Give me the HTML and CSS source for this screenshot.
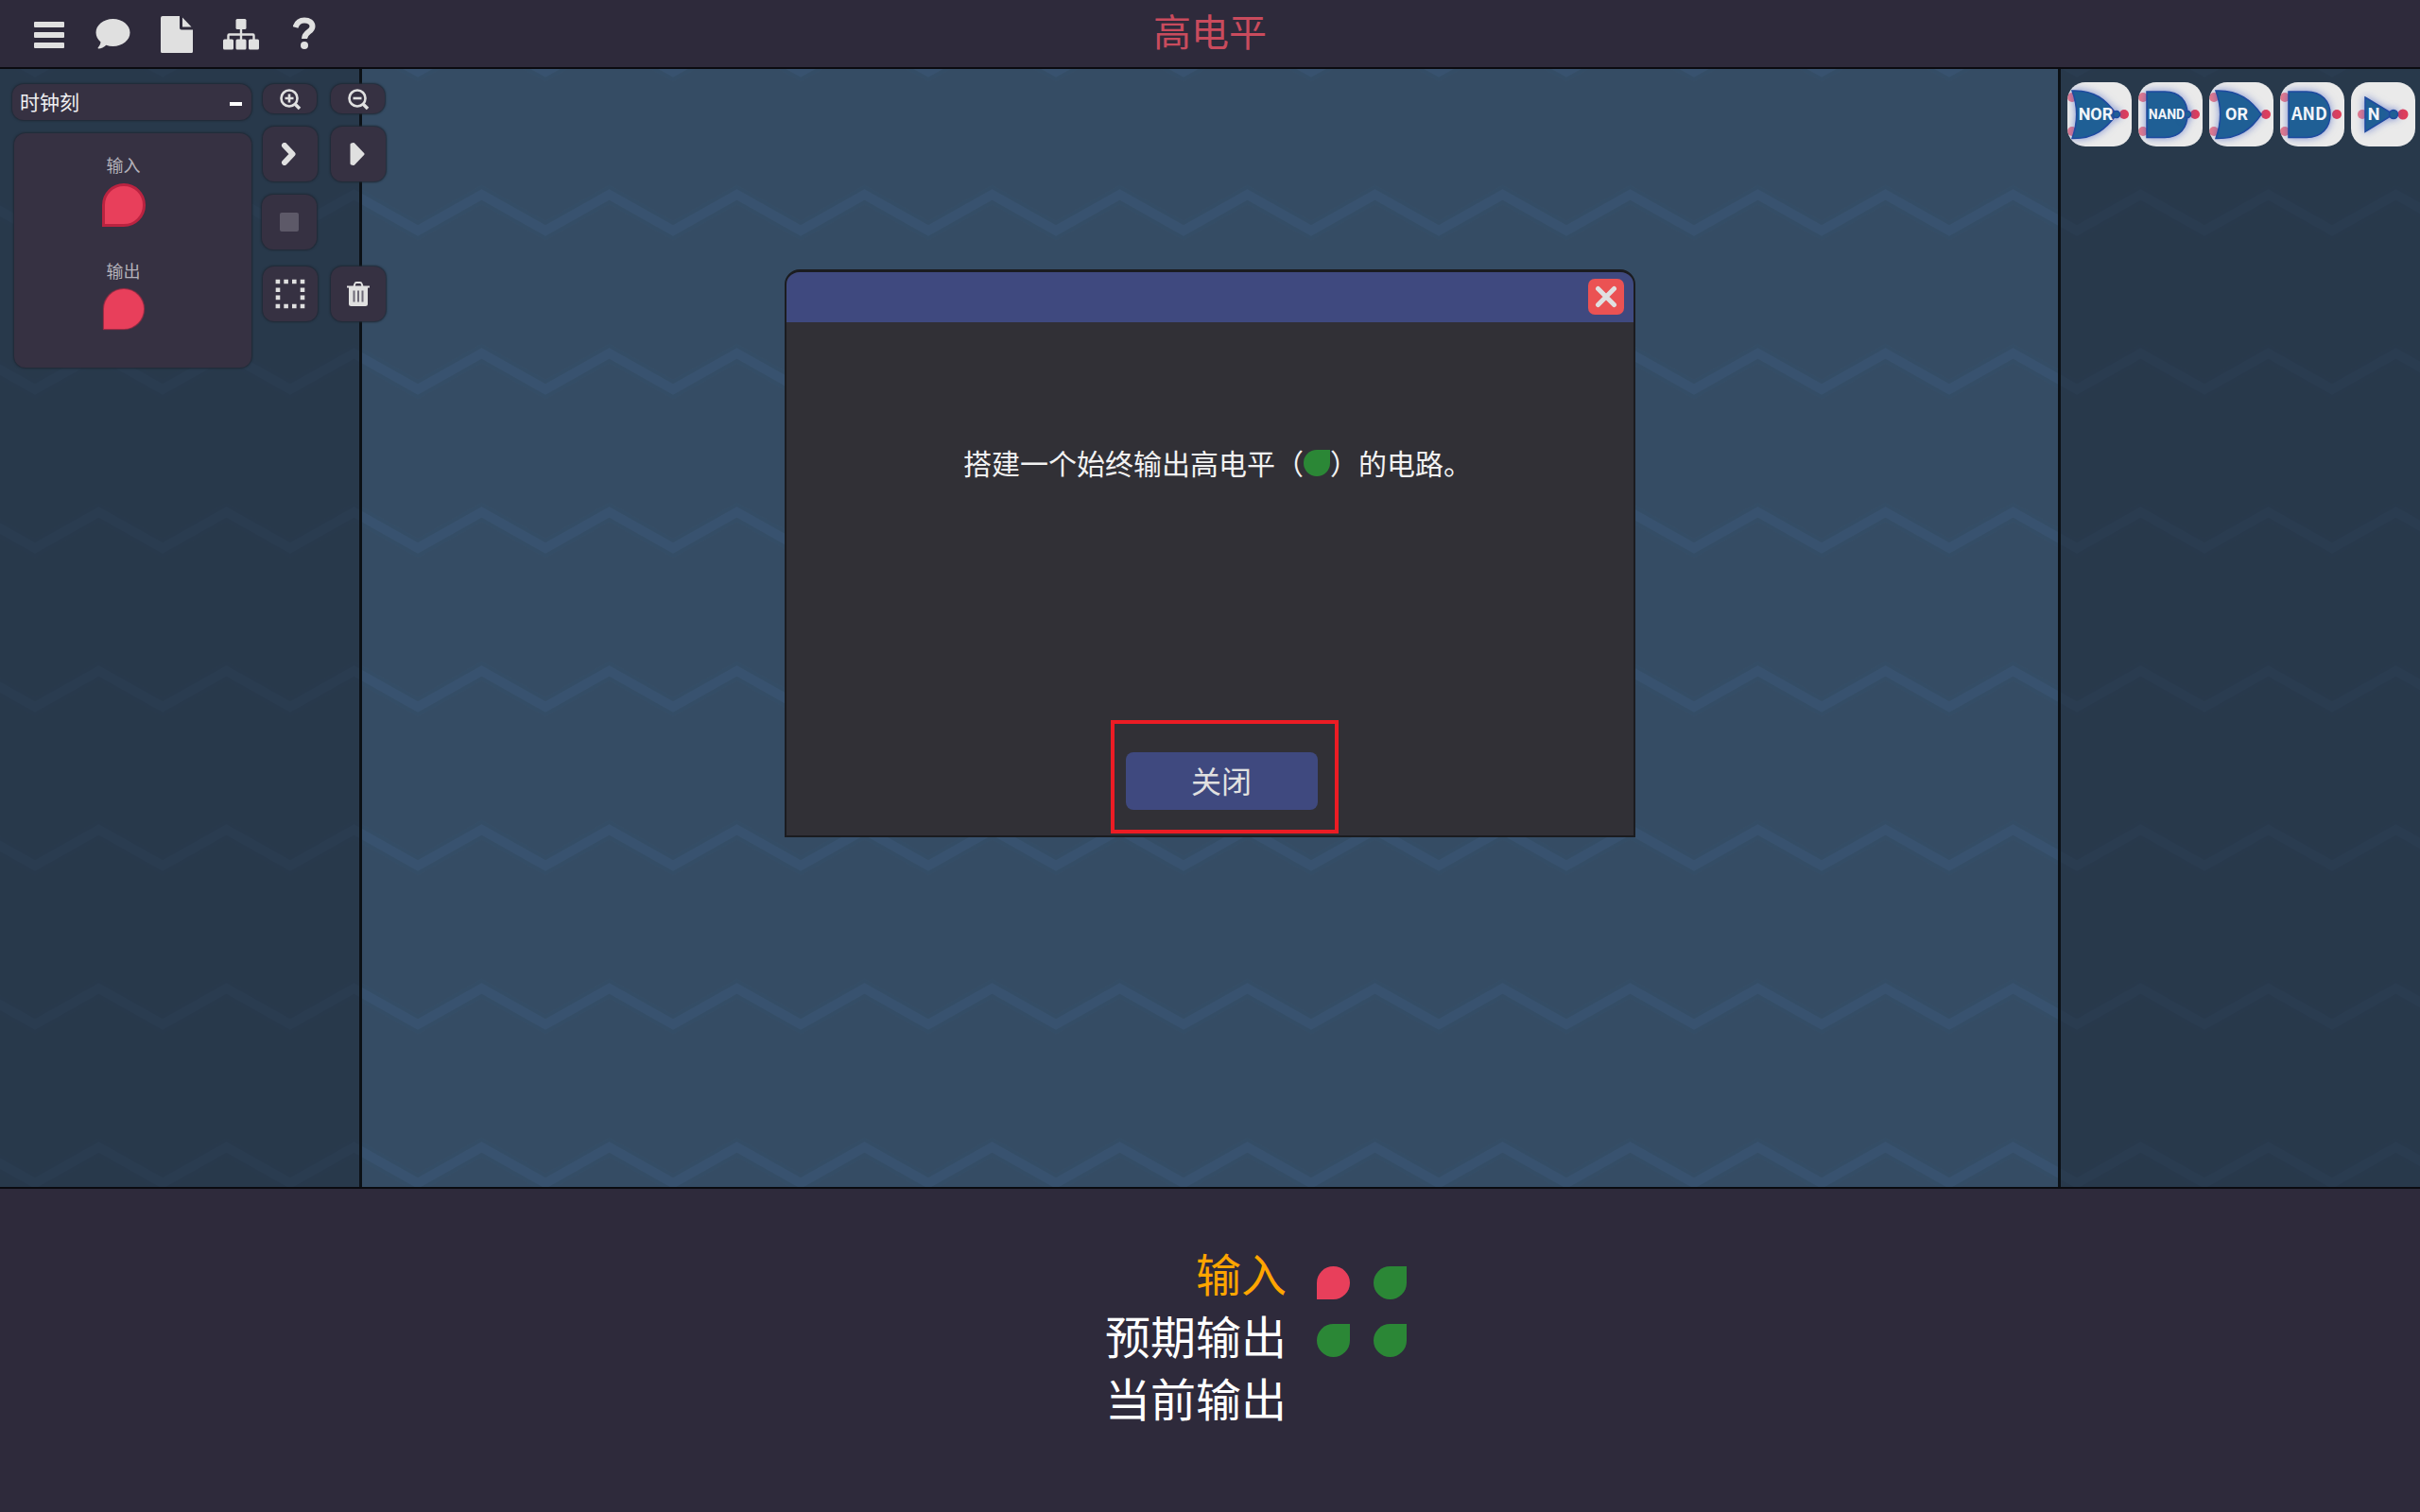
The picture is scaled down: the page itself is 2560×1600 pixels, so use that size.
FILE: index.html
```html
<!DOCTYPE html>
<html lang="zh-CN">
<head>
<meta charset="utf-8">
<meta name="viewport" content="width=device-width, initial-scale=1">
<title>高电平</title>
<link rel="stylesheet" href="styles.css">
</head>
<body>
<header class="topbar">
  <nav class="menu" aria-label="菜单">
    <button class="menu-btn" type="button" aria-label="菜单"><svg width="34" height="40" viewBox="0 0 34 40"><g fill="currentColor"><rect x="1" y="6" width="32" height="6" rx="1"/><rect x="1" y="17" width="32" height="6" rx="1"/><rect x="1" y="28" width="32" height="6" rx="1"/></g></svg></button>
    <button class="menu-btn" type="button" aria-label="对话"><svg width="37" height="40" viewBox="0 0 37 40"><path fill="currentColor" d="M18.500 3C28.500 3 36.500 9.500 36.500 17.500S28.500 32 18.500 32c-2.600 0-5-.4-7.200-1.200C9 33 6 34.500 3.200 34.500c-.7 0-.9-.7-.4-1.200 1.300-1.500 2.400-3.400 2.700-5.800C2.400 24.800.5 21.300.5 17.500.5 9.500 8.500 3 18.500 3z"/></svg></button>
    <button class="menu-btn" type="button" aria-label="文件"><svg width="34" height="40" viewBox="0 0 34 40"><path fill="currentColor" d="M2 0H20V12.500Q20 14.500 22 14.500H34V37.500Q34 39 32.500 39H1.500Q0 39 0 37.500V2Q0 0 2 0zM23 1.500 32.500 11.500H23z"/></svg></button>
    <button class="menu-btn" type="button" aria-label="关卡"><svg width="38" height="40" viewBox="0 0 38 40"><g fill="currentColor"><rect x="13.500" y="3" width="11" height="11" rx="1.500"/><rect x="0" y="24.500" width="11" height="11" rx="1.500"/><rect x="13.500" y="24.500" width="11" height="11" rx="1.500"/><rect x="27" y="24.500" width="11" height="11" rx="1.500"/></g><path fill="none" stroke="currentColor" stroke-width="2.400" d="M19 13v12M5.500 25v-4.500q0-1 1-1h25q1 0 1 1V25"/></svg></button>
    <button class="menu-btn" type="button" aria-label="帮助"><svg width="24" height="40" viewBox="0 0 24 40"><path fill="none" stroke="currentColor" stroke-width="6" d="M2.500 12C4 7 7 4.500 12 4.500c5 0 8.500 2.500 8.500 6.500 0 6-8.500 5.500-8.500 13"/><circle cx="12" cy="31" r="4" fill="currentColor"/></svg></button>
  </nav>
  <h1 class="title">高电平</h1>
</header>

<main class="board">
  <svg class="waves" aria-hidden="true">
    <defs>
      <pattern id="zigzag" x="37" y="101" width="135" height="168" patternUnits="userSpaceOnUse">
        <g fill="none">
          <path stroke="#334e67" stroke-opacity=".5" stroke-width="18" d="M-67.500 32 0 70 67.500 32 135 70 202.500 32"/>
          <path stroke="#38526f" stroke-width="10" d="M-67.500 32 0 70 67.500 32 135 70 202.500 32"/>
        </g>
      </pattern>
    </defs>
    <rect width="100%" height="100%" fill="url(#zigzag)"/>
  </svg>

  <aside class="side side-left">
    <div class="clock">
      <button class="clock-head" type="button"><span>时钟刻</span><span class="dash"></span></button>
      <div class="clock-body">
        <span class="clock-label">输入</span>
        <span class="drop low big ring"></span>
        <span class="clock-label second">输出</span>
        <span class="drop low big"></span>
      </div>
    </div>
    <div class="tools">
      <button class="tool short" type="button" aria-label="放大"><svg width="24" height="24" viewBox="0 0 24 24"><g fill="none" stroke="currentColor" stroke-width="2.600"><circle cx="11" cy="11" r="8.500"/><path d="M17 17l5 5" stroke-width="3.600"/><path d="M6.500 11h9M11 6.500v9"/></g></svg></button>
      <button class="tool short" type="button" aria-label="缩小"><svg width="24" height="24" viewBox="0 0 24 24"><g fill="none" stroke="currentColor" stroke-width="2.600"><circle cx="11" cy="11" r="8.500"/><path d="M17 17l5 5" stroke-width="3.600"/><path d="M6.500 11h9"/></g></svg></button>
      <button class="tool" type="button" aria-label="单步"><svg width="24" height="24" viewBox="0 0 24 24"><path fill="none" stroke="currentColor" stroke-width="6" stroke-linejoin="round" stroke-linecap="round" d="M6 3l8.500 9L6 21"/></svg></button>
      <button class="tool" type="button" aria-label="运行"><svg width="24" height="24" viewBox="0 0 24 24"><path fill="currentColor" stroke="currentColor" stroke-width="3" stroke-linejoin="round" d="M5 2l2-.5L17 12 7 22.500 5 22z"/></svg></button>
      <button class="tool" type="button" aria-label="停止" disabled><svg width="20" height="20" viewBox="0 0 20 20"><rect width="20" height="20" rx="2" fill="#5d5968"/></svg></button>
      <span></span>
      <button class="tool low-row" type="button" aria-label="框选"><svg width="32" height="32" viewBox="0 0 32 32"><path fill="none" stroke="currentColor" stroke-width="4.600" stroke-dasharray="4.600 4.100" d="M.6 3H31.400M.6 29H31.400"/><path fill="none" stroke="currentColor" stroke-width="4.600" stroke-dasharray="4.600 3.600" d="M3 9.400V23M29 9.400V23"/></svg></button>
      <button class="tool low-row" type="button" aria-label="删除"><svg width="24" height="26" viewBox="0 0 24 26"><path fill="none" stroke="currentColor" stroke-width="2" d="M0 5.500h24M7.500 5l1-3q.3-1 1.500-1h4q1.200 0 1.500 1l1 3"/><path fill="currentColor" d="M2 6h20v17.500q0 2.500-2.500 2.500h-15Q2 26 2 23.500z"/><path stroke="#6d6977" stroke-width="2" d="M7.500 9.500v12M12 9.500v12M16.500 9.500v12"/></svg></button>
    </div>
  </aside>

  <div class="field"></div>

  <aside class="side side-right">
    <button class="gate" type="button"><svg viewBox="0 0 68 68"><g fill="#e03e5b"><g opacity=".65"><circle cx="5" cy="16" r="5"/><circle cx="5" cy="52" r="5"/></g><circle cx="60" cy="34" r="5"/></g><path class="shape" d="M5 9C29 8 41 19 52 34 41 49 29 60 5 59.500 11 43 11 25 5 9z"/><circle class="shape" cx="52" cy="34" r="3.500"/><text x="30" y="40" class="gate-text slim">NOR</text></svg></button>
    <button class="gate" type="button"><svg viewBox="0 0 68 68"><g fill="#e03e5b"><g opacity=".65"><circle cx="5" cy="16" r="5"/><circle cx="5" cy="52" r="5"/></g><circle cx="60" cy="34" r="5"/></g><path class="shape" d="M9 10H28C44 10 52 20 52 34S44 58.500 28 58.500H9z"/><circle class="shape" cx="52" cy="34" r="3.500"/><text x="30" y="39" class="gate-text slim long">NAND</text></svg></button>
    <button class="gate" type="button"><svg viewBox="0 0 68 68"><g fill="#e03e5b"><g opacity=".65"><circle cx="5" cy="16" r="5"/><circle cx="5" cy="52" r="5"/></g><circle cx="60" cy="34" r="5"/></g><path class="shape" d="M7 9C32 8 45 20 55 34 45 49 32 60 7 59.500 13 43 13 25 7 9z"/><text x="29" y="40" class="gate-text slim">OR</text></svg></button>
    <button class="gate" type="button"><svg viewBox="0 0 68 68"><g fill="#e03e5b"><g opacity=".65"><circle cx="5" cy="16" r="5"/><circle cx="5" cy="52" r="5"/></g><circle cx="60" cy="34" r="5"/></g><path class="shape" d="M9 10H28C44 10 53 20 53 34S44 58.500 28 58.500H9z"/><text x="31" y="40" class="gate-text">AND</text></svg></button>
    <button class="gate" type="button"><svg viewBox="0 0 68 68"><g fill="#e03e5b"><circle cx="12" cy="34" r="5" opacity=".65"/><circle cx="55" cy="34" r="5.500"/></g><path class="shape" d="M15 16 45 34 15 52.500z"/><circle class="shape" cx="45" cy="34" r="4.500"/><text x="24" y="40" class="gate-text slim">N</text></svg></button>
  </aside>

  <section class="dialog" role="dialog" aria-label="关卡说明">
    <div class="dialog-head">
      <button class="dialog-x" type="button" aria-label="关闭窗口"><svg width="24" height="24" viewBox="0 0 24 24"><path stroke="currentColor" stroke-width="5" stroke-linecap="round" d="M3.500 3.500l17 17M20.500 3.500l-17 17"/></svg></button>
    </div>
    <p class="dialog-text">搭建一个始终输出高电平（<span class="drop high text-size"></span>）的电路。</p>
    <div class="dialog-foot">
      <div class="highlight"><button class="dialog-close" type="button">关闭</button></div>
    </div>
  </section>
</main>

<footer class="signals">
  <div class="signal-names">
    <span class="active">输入</span>
    <span>预期输出</span>
    <span>当前输出</span>
  </div>
  <div class="signal-values">
    <span class="drop low"></span><span class="drop high"></span>
    <span class="drop high"></span><span class="drop high"></span>
  </div>
</footer>
</body>
</html>
```
FILE: styles.css
```css
* { box-sizing: border-box; }

body {
  margin: 0;
  min-height: 100vh;
  display: flex;
  flex-direction: column;
  background: #2e2a3b;
  color: #e0e0e0;
  font-family: "Noto Sans CJK SC", "Noto Sans", sans-serif;
}

button {
  font: inherit;
  color: inherit;
  border: 0;
  padding: 0;
  margin: 0;
  background: none;
}

svg { display: block; }

/* Top bar */
.topbar {
  display: grid;
  grid-template-columns: 1fr auto 1fr;
  align-items: center;
  height: 73px;
  padding: 0 35px;
  border-bottom: 2px solid #0b0b10;
}

.menu { display: flex; gap: 32px; padding-top: 2px; }
.menu-btn:last-child { margin-left: 4px; }

.title {
  margin: 0;
  font-size: 40px;
  line-height: 64px;
  font-weight: 400;
  color: #c94b5d;
  padding-bottom: 7px;
}

/* Board */
.board {
  position: relative;
  flex: 1;
  display: flex;
  background: #354c64;
}

.waves {
  position: absolute;
  inset: 0;
  width: 100%;
  height: 100%;
}

.side {
  position: relative;
  width: 383px;
  display: flex;
  align-items: flex-start;
  background: rgba(27, 38, 49, 0.5);
}

.side-left {
  gap: 11px;
  padding: 16px 0 0 13px;
  border-right: 3px solid #0c1116;
  z-index: 1;
}

.side-right {
  gap: 7px;
  padding: 14px 0 0 7px;
  border-left: 3px solid #0c1116;
}

.field { flex: 1; }

.clock { flex: none; width: 253px; }

.clock-head,
.clock-body,
.tool {
  background: #363142;
  box-shadow: 0 0 2px 1px #1f2834;
  border-radius: 12px;
}

.clock-head {
  display: flex;
  align-items: center;
  justify-content: space-between;
  width: 100%;
  height: 38px;
  padding: 0 10px 0 8px;
  font-size: 21px;
  line-height: 34px;
  color: #f0f0f2;
}

.clock-head span:first-child { padding-bottom: 2px; }

.dash { width: 13px; height: 4px; background: #fff; margin-top: 4px; }

.clock-body {
  display: flex;
  flex-direction: column;
  align-items: center;
  height: 248px;
  margin: 14px 0 0 2px;
  padding: 19px 20px 0 0;
}

.clock-label {
  font-size: 18px;
  line-height: 28px;
  margin-bottom: 6px;
  color: #b4b1ba;
}

.clock-label.second { margin-top: 32px; }

.tools {
  flex: none;
  display: grid;
  grid-template-columns: 58px 58px;
  gap: 14px;
  padding-left: 1px;
}

.tool {
  display: flex;
  align-items: center;
  justify-content: center;
  height: 58px;
}

.tool.short { height: 31px; width: 57px; }
.tool:disabled { margin: 0 1px 0 -1px; }
.tool.low-row { margin-top: 4px; }

/* Level markers: the pointed corner shows low (down-left) or high (up-right) */
.drop { display: block; width: 35px; height: 35px; }
.drop.low { background: #e83f5b; border-radius: 50% 50% 50% 0; }
.drop.high { background: #2b8736; border-radius: 50% 0 50% 50%; }
.drop.big { width: 42px; height: 42px; flex: none; box-shadow: 0 0 1px 1px #a82c45; }
.drop.ring { width: 46px; height: 46px; border: 3px solid #ba2340; box-shadow: none; }
.drop.text-size {
  display: inline-block;
  width: 28px;
  height: 28px;
  vertical-align: -2px;
}

/* Gates */
.gate {
  flex: none;
  width: 68px;
  height: 68px;
  border-radius: 19px;
  overflow: hidden;
  background: #eaeaea;
}

.shape {
  fill: #1f5f95;
  stroke: #1e4aa0;
  stroke-width: 1.5px;
  filter: drop-shadow(0 0 4px rgba(50, 80, 190, 0.6));
}

.gate-text {
  fill: #f2f5fa;
  font-size: 18px;
  font-weight: 700;
  text-anchor: middle;
}

.gate-text.slim { font-family: Roboto, "Liberation Sans", sans-serif; }
.gate-text.long { font-size: 14px; }

/* Dialog */
.dialog {
  position: absolute;
  z-index: 2;
  top: 212px;
  left: 50%;
  transform: translateX(-50%);
  width: 900px;
  height: 601px;
  display: flex;
  flex-direction: column;
  background: #313036;
  border: 2px solid #1b1c20;
  border-top-width: 3px;
  border-radius: 16px 16px 0 0;
  overflow: hidden;
}

.dialog-head {
  display: flex;
  justify-content: flex-end;
  height: 53px;
  padding: 7px 10px;
  background: #3f497f;
}

.dialog-x {
  display: flex;
  align-items: center;
  justify-content: center;
  width: 38px;
  height: 38px;
  border-radius: 7px;
  background: #eb5253;
}

.dialog-text {
  margin: 0;
  padding: 126px 0 0 16px;
  text-align: center;
  font-size: 30px;
  line-height: 44px;
  color: #f2f2f2;
}

.dialog-foot {
  display: flex;
  justify-content: center;
  margin-top: auto;
  padding: 0 0 2px 30px;
}

.highlight {
  border: 4px solid #ec1c24;
  padding: 30px 18px 21px 12px;
}

.dialog-close {
  display: block;
  width: 203px;
  height: 61px;
  padding-bottom: 3px;
  border-radius: 8px;
  background: #3f497f;
  font-size: 32px;
  line-height: 56px;
}

/* Signals */
.signals {
  display: flex;
  justify-content: center;
  gap: 32px;
  height: 344px;
  padding: 55px 0 0 97px;
  border-top: 2px solid #0b0b10;
}

.signal-names {
  display: flex;
  flex-direction: column;
  align-items: flex-end;
  font-size: 48px;
  line-height: 66px;
  color: #fff;
}

.active { color: #ffa500; }

.signal-values {
  display: grid;
  grid-template-columns: 35px 35px;
  grid-auto-rows: 35px;
  gap: 26px 25px;
  padding-top: 27px;
}
```
